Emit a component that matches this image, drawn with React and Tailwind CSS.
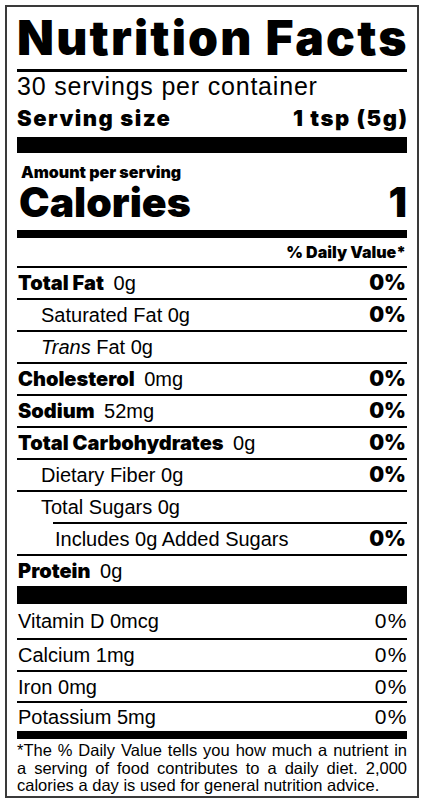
import React from 'react';

const heavy = { fontFamily: 'Inter, "Liberation Sans", sans-serif' };

const nutrients = [
  { label: 'Total Fat', amount: '0g', dv: '0%', bold: true },
  { label: 'Saturated Fat', amount: '0g', dv: '0%', indent: 1 },
  { label: 'Trans', amount: 'Fat 0g', italic: true, indent: 1 },
  { label: 'Cholesterol', amount: '0mg', dv: '0%', bold: true },
  { label: 'Sodium', amount: '52mg', dv: '0%', bold: true },
  { label: 'Total Carbohydrates', amount: '0g', dv: '0%', bold: true },
  { label: 'Dietary Fiber', amount: '0g', dv: '0%', indent: 1 },
  { label: 'Total Sugars', amount: '0g', indent: 1, shortLine: true },
  { label: 'Includes 0g Added Sugars', amount: '', dv: '0%', indent: 2 },
];

const vitamins = [
  { label: 'Vitamin D 0mcg', dv: '0%', h: 'h-[34px]' },
  { label: 'Calcium 1mg', dv: '0%', h: 'h-[30px]' },
  { label: 'Iron 0mg', dv: '0%', h: 'h-[29px]' },
  { label: 'Potassium 5mg', dv: '0%', h: 'h-[28px]' },
];

function NutrientRow({ item }) {
  const pad = item.indent === 2 ? 'pl-[38px]' : item.indent === 1 ? 'pl-[24px]' : 'pl-[1px]';
  return (
    <div>
      <div className={`flex h-[30px] items-center justify-between text-[20px] ${pad}`}>
        <span>
          {item.bold ? (
            <span className="font-black" style={heavy}>{item.label}</span>
          ) : item.italic ? (
            <span className="italic">{item.label}</span>
          ) : (
            <span>{item.label}</span>
          )}
          {item.amount && <span>{item.bold ? '\u00a0\u2009' : ' '}{item.amount}</span>}
        </span>
        {item.dv && (
          <span className="pr-[1px] text-[21px] font-black" style={heavy}>{item.dv}</span>
        )}
      </div>
      {item.shortLine ? (
        <div className="ml-[36px] h-[2px] bg-black" />
      ) : (
        <div className="h-[2px] bg-black" />
      )}
    </div>
  );
}

export default function App() {
  return (
    <div className="min-h-screen bg-white p-[5px]" style={{ fontFamily: '"Liberation Sans", Arial, sans-serif' }}>
      <div className="w-[414px] border-2 border-[#3a3a3a] px-[10px] text-black">
        {/* Header */}
        <h1
          className="h-[62px] text-[48px] leading-[62px] font-black tracking-[2.2px] whitespace-nowrap"
          style={heavy}
        >
          Nutrition Facts
        </h1>
        <div className="h-[3px] bg-black" />
        <p className="h-[28px] text-[25px] leading-[28px] tracking-[0.8px] whitespace-nowrap">30 servings per container</p>
        <div className="flex h-[37px] items-center justify-between text-[22px] font-black tracking-[1.5px]" style={heavy}>
          <span>Serving size</span>
          <span className="mr-[-1.5px]">1 tsp (5g)</span>
        </div>
        <div className="h-[16px] bg-black" />

        {/* Calories */}
        <p className="h-[28px] pt-[10px] pl-[4px] text-[16px] leading-[18px] font-black" style={heavy}>Amount per serving</p>
        <div className="flex h-[49px] items-start justify-between pl-[2px] text-[41px] font-black leading-[43px]" style={heavy}>
          <span>Calories</span>
          <span>1</span>
        </div>
        <div className="h-[8px] bg-black" />

        <div className="flex h-[28px] items-center justify-end pr-[1px] text-[16px] font-black" style={heavy}>
          % Daily Value*
        </div>
        <div className="h-[2px] bg-black" />

        {nutrients.map((n) => (
          <NutrientRow key={n.label} item={n} />
        ))}

        <div className="flex h-[30px] items-center pl-[1px] text-[20px]">
          <span className="font-black" style={heavy}>Protein</span>
          <span>&nbsp;&thinsp;0g</span>
        </div>
        <div className="h-[18px] bg-black" />

        {vitamins.map((v, i) => (
          <div key={v.label}>
            <div className={`flex items-center justify-between pl-[1px] text-[20px] ${v.h}`}>
              <span>{v.label}</span>
              <span className="mr-[-1px] text-[21px] tracking-[1.5px]">{v.dv}</span>
            </div>
            {i < vitamins.length - 1 && <div className="h-[2px] bg-black" />}
          </div>
        ))}
        <div className="h-[8px] bg-black" />

        {/* Footnote */}
        <div className="pt-[3px] pb-[1px] text-[16.5px] leading-[17.5px]">
          <span className="block text-justify [text-align-last:justify]">
            *The % Daily Value tells you how much a nutrient in
          </span>
          <span className="block text-justify [text-align-last:justify]">
            a serving of food contributes to a daily diet. 2,000
          </span>
          <span className="block">calories a day is used for general nutrition advice.</span>
        </div>
      </div>
    </div>
  );
}
